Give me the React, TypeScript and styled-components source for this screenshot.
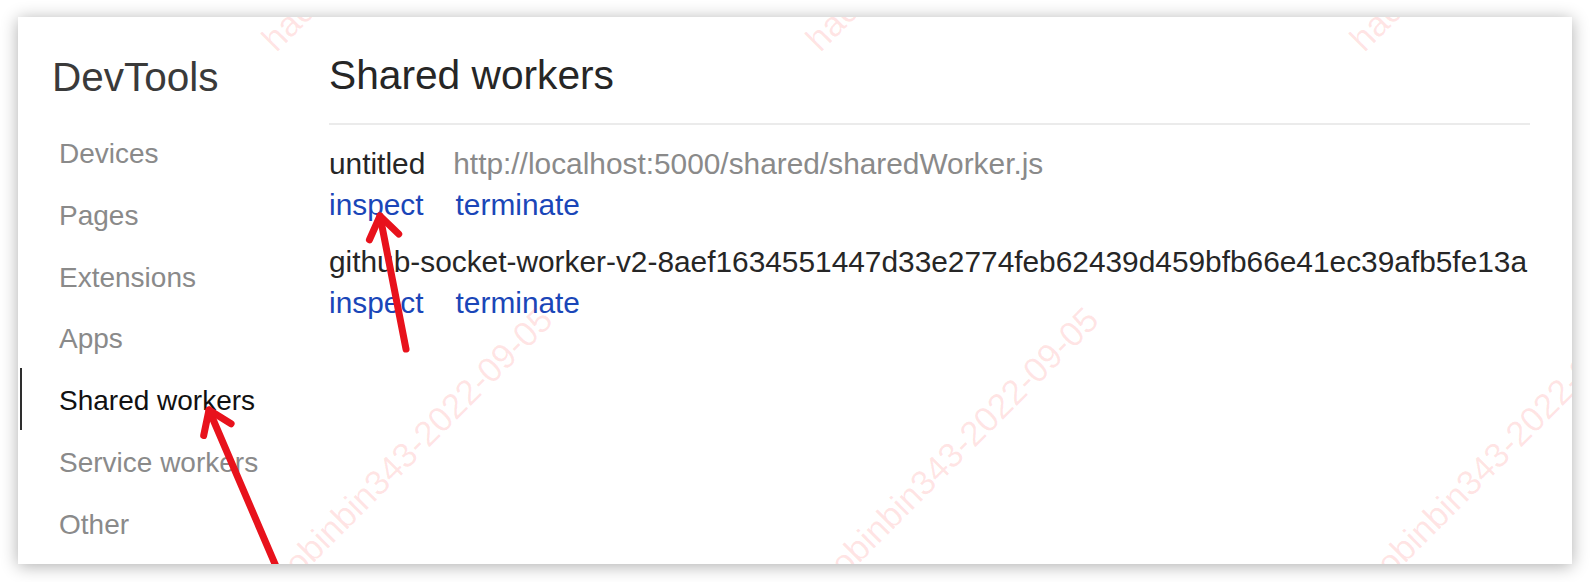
import styled, { createGlobalStyle } from 'styled-components';

const GlobalStyle = createGlobalStyle`
  html, body {
    margin: 0;
    padding: 0;
    background: #ffffff;
  }
  body {
    font-family: "Liberation Sans", Arial, sans-serif;
    width: 1590px;
    height: 582px;
    overflow: hidden;
  }
`;

const Frame = styled.div`
  padding: 17px 18px;
`;

const Card = styled.div`
  position: relative;
  display: flex;
  width: 1554px;
  height: 547px;
  background: #ffffff;
  overflow: hidden;
  box-shadow: 0 2px 16px rgba(0, 0, 0, 0.32);
`;

const Sidebar = styled.nav`
  flex: 0 0 311px;
  padding-top: 36px;
`;

const Brand = styled.div`
  padding-left: 34px;
  font-size: 40.5px;
  line-height: 48px;
  color: #3a3a3a;
  margin-bottom: 20px;
`;

const NavItem = styled.div<{ $active?: boolean }>`
  margin-left: 2px;
  border-left: 2px solid ${(p) => (p.$active ? '#2e2e2e' : 'transparent')};
  padding: 4px 0 0 37px;
  font-size: 28px;
  line-height: 57.75px;
  color: ${(p) => (p.$active ? '#111111' : '#8a8a8a')};
`;

const Main = styled.main`
  flex: 1;
  padding: 34px 42px 0 0;
`;

const Header = styled.h1`
  margin: 0;
  padding-bottom: 24px;
  border-bottom: 2px solid #ebebeb;
  font-size: 40.7px;
  font-weight: normal;
  line-height: 48px;
  color: #262626;
`;

const WorkerList = styled.div`
  display: flex;
  flex-direction: column;
  gap: 17px;
  padding-top: 19px;
`;

const Worker = styled.div`
  font-size: 29.85px;
  line-height: 40px;
  white-space: nowrap;
`;

const Name = styled.span`
  color: #262626;
`;

const Url = styled.span`
  margin-left: 28px;
  color: #8a8a8a;
`;

const Actions = styled.div`
  display: flex;
  gap: 32px;
  padding-top: 1px;
`;

const Action = styled.span`
  color: #1a46b8;
  cursor: pointer;
`;

const Overlay = styled.svg`
  position: absolute;
  inset: 0;
  pointer-events: none;
`;

const Mark = styled.span<{ $x: number; $y: number }>`
  position: absolute;
  left: ${(p) => p.$x}px;
  top: ${(p) => p.$y - 40}px;
  font-size: 35px;
  line-height: 40px;
  color: rgba(255, 40, 40, 0.12);
  white-space: nowrap;
  transform-origin: 0 100%;
  transform: rotate(-45deg);
  pointer-events: none;
`;

const navItems = ['Devices', 'Pages', 'Extensions', 'Apps', 'Shared workers', 'Service workers', 'Other'];

const workers = [
  { name: 'untitled', url: 'http://localhost:5000/shared/sharedWorker.js' },
  { name: 'github-socket-worker-v2-8aef1634551447d33e2774feb62439d459bfb66e41ec39afb5fe13a', url: '' },
];

const marks = [
  { x: 264, y: 42 },
  { x: 808, y: 42 },
  { x: 1352, y: 42 },
  { x: 259, y: 594 },
  { x: 805, y: 594 },
  { x: 1351, y: 594 },
];

type Pt = [number, number];

const Arrow = ({ tail, tip }: { tail: Pt; tip: Pt }) => {
  const dx = tail[0] - tip[0];
  const dy = tail[1] - tip[1];
  const len = Math.hypot(dx, dy);
  const ux = dx / len;
  const uy = dy / len;
  const a = (35 * Math.PI) / 180;
  const w = 26;
  const wing = (s: number): Pt => [
    tip[0] + w * (ux * Math.cos(s * a) - uy * Math.sin(s * a)),
    tip[1] + w * (ux * Math.sin(s * a) + uy * Math.cos(s * a)),
  ];
  const l = wing(1);
  const r = wing(-1);
  return (
    <g stroke="#e8121c" strokeWidth={7} strokeLinecap="round" strokeLinejoin="round" fill="none">
      <line x1={tail[0]} y1={tail[1]} x2={tip[0]} y2={tip[1]} />
      <polyline points={`${l[0]},${l[1]} ${tip[0]},${tip[1]} ${r[0]},${r[1]}`} />
    </g>
  );
};

const App = () => {
  return (
    <>
      <GlobalStyle />
      <Frame>
        <Card>
          <Sidebar>
            <Brand>DevTools</Brand>
            {navItems.map((item) => (
              <NavItem key={item} $active={item === 'Shared workers'}>
                {item}
              </NavItem>
            ))}
          </Sidebar>
          <Main>
            <Header>Shared workers</Header>
            <WorkerList>
              {workers.map((w) => (
                <Worker key={w.name}>
                  <div>
                    <Name>{w.name}</Name>
                    {w.url && <Url>{w.url}</Url>}
                  </div>
                  <Actions>
                    <Action>inspect</Action>
                    <Action>terminate</Action>
                  </Actions>
                </Worker>
              ))}
            </WorkerList>
          </Main>
          {marks.map((m, i) => (
            <Mark key={i} $x={m.x} $y={m.y}>
              haobinbin343-2022-09-05
            </Mark>
          ))}
          <Overlay width="1554" height="547">
            <Arrow tail={[388, 332]} tip={[362, 199]} />
            <Arrow tail={[266, 568]} tip={[191, 393]} />
          </Overlay>
        </Card>
      </Frame>
    </>
  );
};

export default App;
